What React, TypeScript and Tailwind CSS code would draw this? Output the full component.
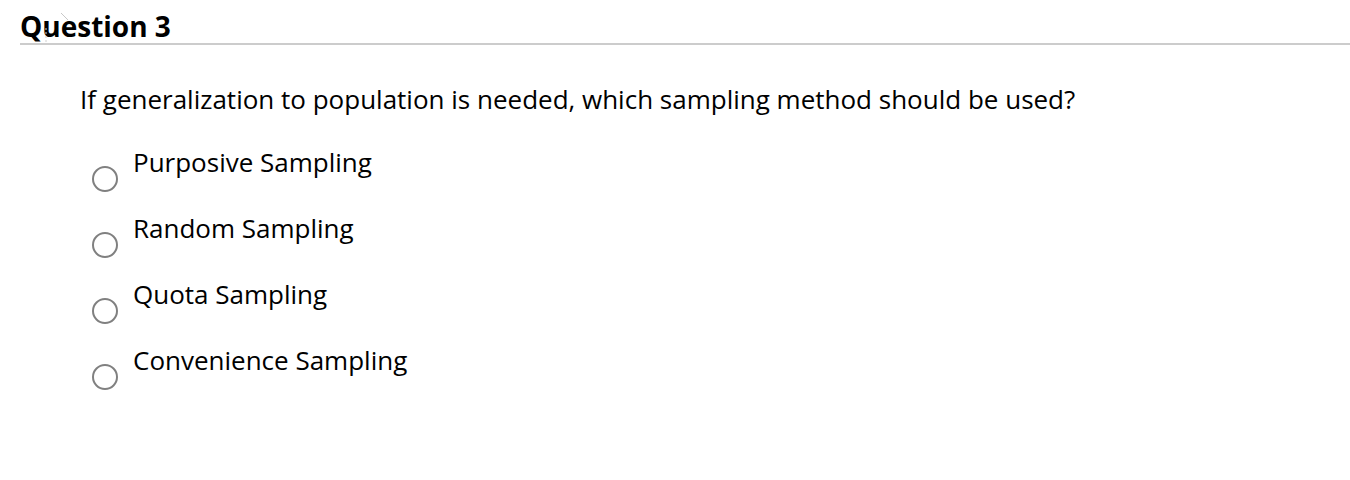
const options = ['Purposive Sampling', 'Random Sampling', 'Quota Sampling', 'Convenience Sampling']

export default function App() {
  return (
    <div className="relative w-[1350px] h-[480px] bg-white text-black font-['Open_Sans',sans-serif]">
      <div className="pl-5 pt-[9px]">
        <h2 className="text-[28px] leading-[34px] font-bold border-b-2 border-[#cccccc]">Question 3</h2>
      </div>
      {/* faint cursor marks over the heading */}
      <svg className="absolute left-[40px] top-[10px]" width="32" height="36" viewBox="0 0 32 36">
        <path d="M21 3 L28 10" stroke="#c8c8c8" strokeWidth="1" />
        <path d="M6 18 L6 34" stroke="#d0d0d0" strokeWidth="1" strokeDasharray="2 2" />
      </svg>
      <div className="pl-[80px] pt-[36px]">
        <p className="text-[26px] leading-[36px]">
          If generalization to population is needed, which sampling method should be used?
        </p>
        <div className="mt-[27px] flex flex-col gap-[18px] pl-[12px]">
          {options.map(opt => (
            <label key={opt} className="flex items-start gap-[15px]">
              <span className="mt-[22px] w-[26px] h-[26px] rounded-full border-2 border-[#808080] bg-white shrink-0" />
              <span className="text-[26px] leading-[36px]">{opt}</span>
            </label>
          ))}
        </div>
      </div>
    </div>
  )
}
